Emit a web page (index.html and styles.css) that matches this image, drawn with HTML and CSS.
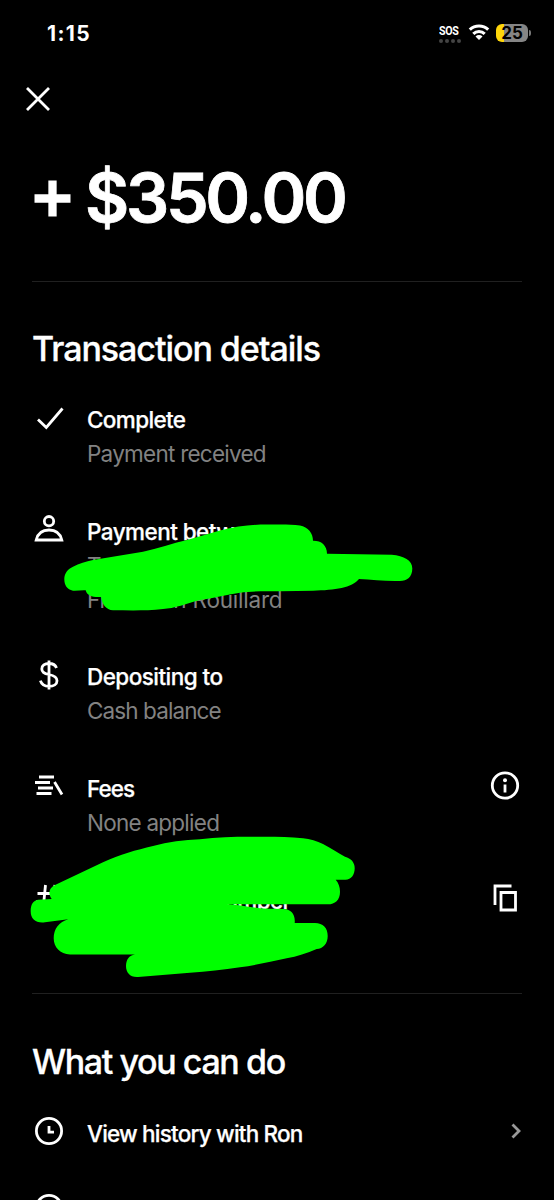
FILE: index.html
```html
<!DOCTYPE html>
<html lang="en">
<head>
<meta charset="utf-8">
<title>Transaction details</title>
<link rel="stylesheet" href="styles.css">
</head>
<body>
<div class="screen">
  <header class="status">
    <span class="time">1:15</span>
    <div class="indicators">
      <div class="sos"><span>SOS</span><i class="dots"><b></b><b></b><b></b><b></b></i></div>
      <svg class="wifi" width="22" height="18" viewBox="0 0 22 18">
        <g fill="none" stroke="#fff" stroke-width="3.1"><path d="M1.8 6.7a13.2 13.2 0 0 1 18.4 0M5.3 10.8a8.2 8.2 0 0 1 11.4 0"/></g>
        <path fill="#fff" d="M7.5 13.4a5 5 0 0 1 7 0L11 17z"/>
      </svg>
      <div class="battery"><span>25</span></div><i class="nub"></i>
    </div>
  </header>
  <nav class="nav"><svg width="26" height="26" viewBox="0 0 26 26"><path class="line" d="M2 2l22 22M24 2l-22 22"/></svg></nav>
  <h1 class="amount"><svg class="plus" width="37" height="80" viewBox="0 0 37 80"><path d="M18.500 23.500v36M.5 41.500h36"/></svg><span>$350.00</span></h1>
  <section class="section">
    <h2 class="heading">Transaction details</h2>
    <div class="rows">
      <div class="row">
        <svg class="icon" viewBox="0 0 32 32"><path class="line" d="M5 17.5l8.3 8L29.5 6.5"/></svg>
        <div class="copy"><p class="title complete">Complete</p><p class="sub received">Payment received</p></div>
      </div>
      <div class="row">
        <svg class="icon" viewBox="0 0 32 32"><circle class="line" cx="16" cy="8.2" r="4.7"/><path class="line" d="M3.2 27H28.800C27.200 20.500 22.400 17 16 17S4.800 20.500 3.200 27z"/></svg>
        <div class="copy"><p class="title between">Payment between</p><p class="sub">To</p><p class="sub from">From Ron Rouillard</p></div>
      </div>
      <div class="row">
        <svg class="icon" viewBox="0 0 32 32"><path class="line" d="M16 1.500v29M23.500 9C22.500 6.100 19.800 4.500 16 4.500c-4.300 0-7.200 2-7.200 5.400 0 3.700 3.200 4.800 7.200 5.600 4.600.9 8 2.200 8 6.200 0 3.600-3.300 5.700-8 5.700-4.600 0-7.500-2-8.600-5.700"/></svg>
        <div class="copy"><p class="title depositing">Depositing to</p><p class="sub cash">Cash balance</p></div>
      </div>
      <div class="row">
        <svg class="icon" viewBox="0 0 32 32"><path class="line" d="M6 7h15M2 12.500h15M5 18h15M3.500 23.500h15M21.500 12L29 24.500"/></svg>
        <div class="copy"><p class="title fees">Fees</p><p class="sub applied">None applied</p></div>
        <svg class="icon action" viewBox="0 0 32 32"><circle class="line" cx="16" cy="15.500" r="12.700"/><circle fill="#fff" cx="16" cy="10.200" r="2"/><path class="line" d="M16 14.500v8"/></svg>
      </div>
      <div class="row">
        <svg class="icon" viewBox="0 0 32 32"><path class="line" d="M12.500 3L10 28M22 3l-2.500 25M4.500 11.500h23M3.500 19.500h23"/></svg>
        <div class="copy"><p class="title number">Transaction number</p><p class="sub">&nbsp;</p></div>
        <svg class="icon action" viewBox="0 0 32 32"><path class="line" d="M6 23V4h16.500M12 10.500h14.500v17.500H12z"/></svg>
      </div>
    </div>
  </section>
  <section class="section next">
    <h2 class="heading can-do">What you can do</h2>
    <div class="rows">
      <div class="row">
        <svg class="icon" viewBox="0 0 32 32"><circle class="line" cx="16" cy="16" r="12.600"/><path class="line" d="M16 11v6.200h5"/></svg>
        <div class="copy"><p class="title history">View history with Ron</p></div>
        <svg class="icon action chevron" viewBox="0 0 32 32"><path class="line" d="M23.500 9.500l6.500 6.500-6.500 6.500"/></svg>
      </div>
      <div class="row"><svg class="icon" viewBox="0 0 32 32"><circle class="line" cx="16" cy="16" r="12.600"/></svg></div>
    </div>
  </section>
  <svg class="marker" width="554" height="1200" viewBox="0 0 554 1200" fill="#00ff00">
    <path d="M64.300 579C64.300 573 68 569 73 566.700C79 563.500 86 561.500 93 560L143 551.700C158 548.500 172 543.500 187 540L220 530.500C237 526 252 524.500 267 524.500C279 524.500 290 524 300 525.500C308 527 313 533 313 540.700C321 540.500 327 545 327 553.700L391.700 554.700C404 556 412.300 560 412.300 568.500C412.300 577 407 581 400 581C386 581.500 372 579.500 359 579C352 588 335 590 313 590.700L280 591.300C266 591.500 251 591 240 592.700C226 595 213 598 200 600C187 603.500 174 608.500 163 609C146 611 129 610.300 113 610.300C106 610 102 604 101 597C93 597.500 87 596 85.700 590.300C81 590 77 591 73 590.700C67 589.500 64.300 585 64.300 579Z"/>
    <path d="M30.700 911.500C30.500 905 33 900.500 38 899.700L51.700 899C47.500 893 49.500 887.500 55 885L103 862.300C120 854.500 136 850 153 846C168 842 184 840 200 839.300C219 836.500 238 836.700 256.700 836.700C272 836.700 288 836.500 303 838.300C310 839 317 841 323 844C331 848 338 853 345 856.700C351 858.500 354.700 862 354.700 868.300C354.700 875 351 880 345 879.700H335.700C338.500 883 340 887 340 891.700C340 900 335 904.300 328 904.300H226.700C240 904.500 255 908.700 270 908.700L284 909C291 909.500 295.500 914 294.700 923H315C323 923 327.700 928 327.700 936C327.700 944 323 948.500 316.700 949C307 953 297 956.500 286.700 958.300C271 962 255 965 240 967.300C223 970 207 971.500 190 972.700L138 977C130 977.500 126 972.500 126 966C126 960 129 955 135 954.500H70C60 954 53.700 947.500 53.700 938.300C53.700 929 59 922 68.300 919.300L45 922.300C36 923.500 30.700 919 30.700 911.500Z"/>
  </svg>
</div>
</body>
</html>
```
FILE: styles.css
```css
* { box-sizing: border-box; }
body, h1, h2, p { margin: 0; }
body { background: #000; color: #fff; font-family: Inter, sans-serif; overflow: hidden; }
.screen { position: relative; height: 1200px; overflow: hidden; padding: 0 32px; }
.status { display: flex; justify-content: space-between; height: 86px; padding: 20px 0 0 15px; }
.time { font-size: 21px; line-height: 27px; font-weight: 700; letter-spacing: 1.4px; }
.indicators { display: flex; align-items: flex-start; margin-right: -9px; }
.sos { width: 22px; height: 20px; margin: 4px 7px 0 0; }
.sos span { display: block; width: 22px; font: 700 13px/13px Roboto, sans-serif; letter-spacing: -.4px; transform: scaleX(.82); transform-origin: 0 0; }
.dots { display: flex; justify-content: space-between; padding-top: 2px; }
.dots b { width: 4px; height: 4px; border-radius: 50%; background: #444; }
.wifi { margin: 3px 6px 0 0; }
.battery { width: 32px; height: 18px; margin-top: 4px; border-radius: 6px; background: linear-gradient(90deg, #ffd60a 8px, #858585 8px); color: #000; text-align: center; font-size: 17px; line-height: 18px; font-weight: 700; }
.nub { width: 2px; height: 6px; margin: 10px 0 0 1px; border-radius: 0 2px 2px 0; background: #777; }
.nav { height: 70.500px; margin-left: -7px; }
.nav svg { display: block; }
.line { fill: none; stroke: #fff; stroke-width: 2.800; }
.amount { display: flex; gap: 14px; height: 125px; border-bottom: 1px solid #202020; font-size: 68px; line-height: 80px; font-weight: 600; letter-spacing: -3.300px; -webkit-text-stroke: .8px #fff; }
.plus { margin-left: 2px; fill: none; stroke: #fff; stroke-width: 8.300; }
.section { padding-top: 45px; }
.heading { height: 44px; font-size: 34px; line-height: 44px; font-weight: 500; letter-spacing: -1.050px; white-space: nowrap; -webkit-text-stroke: .3px #fff; }
.can-do { letter-spacing: -1.400px; }
.rows { display: grid; gap: 43.600px; padding-top: 32px; }
.row { display: flex; }
.icon { flex: none; width: 32px; height: 32px; margin: -1px 0 0 1px; }
.action { margin-right: 1px; }
.copy { flex: 1; padding-left: 22px; position: relative; top: .8px; }
.title, .sub { font-size: 22.500px; line-height: 34px; white-space: nowrap; }
.title { font-weight: 500; letter-spacing: -.550px; -webkit-text-stroke: .25px #fff; }
.sub { color: #828282; letter-spacing: -.750px; }
.complete { letter-spacing: -.650px; }
.from { letter-spacing: -.220px; }
.cash { letter-spacing: -.900px; }
.fees { letter-spacing: -1px; }
.number { letter-spacing: -.670px; }
.history { letter-spacing: -.800px; }
.chevron .line { stroke: #999; }
.next { margin-top: 42px; padding-top: 46px; border-top: 1px solid #202020; }
.marker { position: absolute; left: 0; top: 0; }
```
